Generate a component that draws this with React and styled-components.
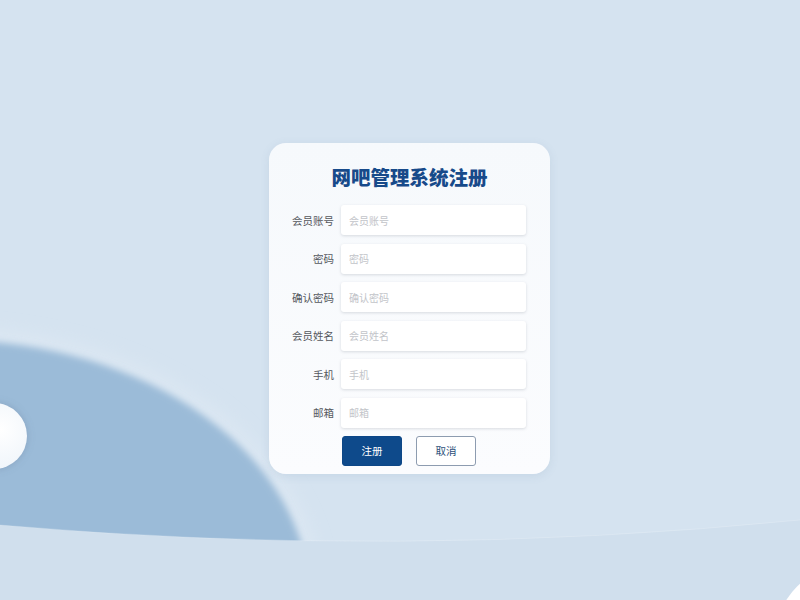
import React from "react";
import styled, { createGlobalStyle } from "styled-components";

const Global = createGlobalStyle`
  html, body { margin: 0; padding: 0; }
  body {
    background: #d5e3f0;
    font-family: "Noto Sans CJK SC", "Noto Sans", sans-serif;
  }
  * { box-sizing: border-box; }
`;

const Page = styled.div`
  position: relative;
  width: 800px;
  height: 600px;
  overflow: hidden;
  display: flex;
  align-items: flex-start;
  justify-content: flex-start;
  padding: 143px 0 0 269px;
`;

const Backdrop = styled.svg`
  position: absolute;
  inset: 0;
  width: 800px;
  height: 600px;
  z-index: 0;
`;

const Card = styled.form`
  position: relative;
  z-index: 1;
  width: 281px;
  height: 331px;
  border-radius: 17px;
  background: linear-gradient(180deg, #f6f9fc 0%, #fbfcfe 100%);
  box-shadow: 0 2px 10px rgba(90, 120, 160, 0.12);
  padding: 22px 24px 0 9px;
  display: flex;
  flex-direction: column;
`;

const Title = styled.h1`
  margin: 0 0 16px 15px;
  font-size: 19.5px;
  line-height: 24px;
  font-weight: 900;
  color: #174a8a;
  text-align: center;
  letter-spacing: 0;
`;

const Fields = styled.div`
  display: grid;
  grid-template-columns: 56px 185px;
  column-gap: 7px;
  row-gap: 8.5px;
  align-items: center;
`;

const Label = styled.label`
  text-align: right;
  font-size: 10.5px;
  color: #55585e;
  white-space: nowrap;
`;

const Input = styled.input`
  height: 30px;
  width: 185px;
  border: none;
  outline: none;
  border-radius: 3px;
  background: #ffffff;
  box-shadow: 0 1px 3px rgba(60, 70, 90, 0.18);
  padding: 0 8px;
  font-family: inherit;
  font-size: 10px;
  color: #333;
  &::placeholder { color: #c2c4c9; }
`;

const Actions = styled.div`
  display: flex;
  gap: 14px;
  margin: 8px 0 0 64px;
`;

const Button = styled.button`
  width: 60px;
  height: 30px;
  border-radius: 3px;
  font-family: inherit;
  font-size: 10.5px;
  cursor: pointer;
  border: 1px solid ${(p) => (p.$primary ? "#0d4787" : "#8d9cb0")};
  background: ${(p) => (p.$primary ? "#0e4a8b" : "#ffffff")};
  color: ${(p) => (p.$primary ? "#ffffff" : "#2b4f7a")};
`;

const fields = [
  ["会员账号", "会员账号", "text"],
  ["密码", "密码", "password"],
  ["确认密码", "确认密码", "password"],
  ["会员姓名", "会员姓名", "text"],
  ["手机", "手机", "text"],
  ["邮箱", "邮箱", "text"],
];

export default function App() {
  return (
    <>
      <Global />
      <Page>
        <Backdrop viewBox="0 0 800 600" aria-hidden="true">
          <defs>
            <filter id="soft" x="-20%" y="-20%" width="140%" height="140%">
              <feGaussianBlur stdDeviation="9" />
            </filter>
            <filter id="edge" x="-20%" y="-20%" width="140%" height="140%">
              <feGaussianBlur stdDeviation="3.5" />
            </filter>
            <radialGradient id="ball" cx="0.6" cy="0.4" r="0.7">
              <stop offset="0" stopColor="#ffffff" />
              <stop offset="1" stopColor="#eef4fa" />
            </radialGradient>
          </defs>
          <ellipse cx="-50" cy="600" rx="370" ry="270" fill="#dde8f3" filter="url(#soft)" />
          <ellipse cx="-50" cy="600" rx="360" ry="260" fill="#9bbbd8" filter="url(#edge)" />
          <path d="M0,525 Q400,560 800,520 L800,600 L0,600 Z" fill="#d0dfed" />
          <path d="M0,525 Q400,560 800,520" fill="none" stroke="rgba(255,255,255,0.18)" strokeWidth="1" />
          <circle cx="-6" cy="436" r="34" fill="rgba(90,110,140,0.25)" filter="url(#edge)" />
          <circle cx="-6" cy="436" r="33" fill="url(#ball)" />
          <circle cx="852" cy="642" r="78" fill="#ffffff" />
        </Backdrop>
        <Card onSubmit={(e) => e.preventDefault()}>
          <Title>网吧管理系统注册</Title>
          <Fields>
            {fields.map(([label, ph, type]) => (
              <React.Fragment key={label}>
                <Label>{label}</Label>
                <Input type={type} placeholder={ph} />
              </React.Fragment>
            ))}
          </Fields>
          <Actions>
            <Button type="submit" $primary>注册</Button>
            <Button type="button">取消</Button>
          </Actions>
        </Card>
      </Page>
    </>
  );
}
